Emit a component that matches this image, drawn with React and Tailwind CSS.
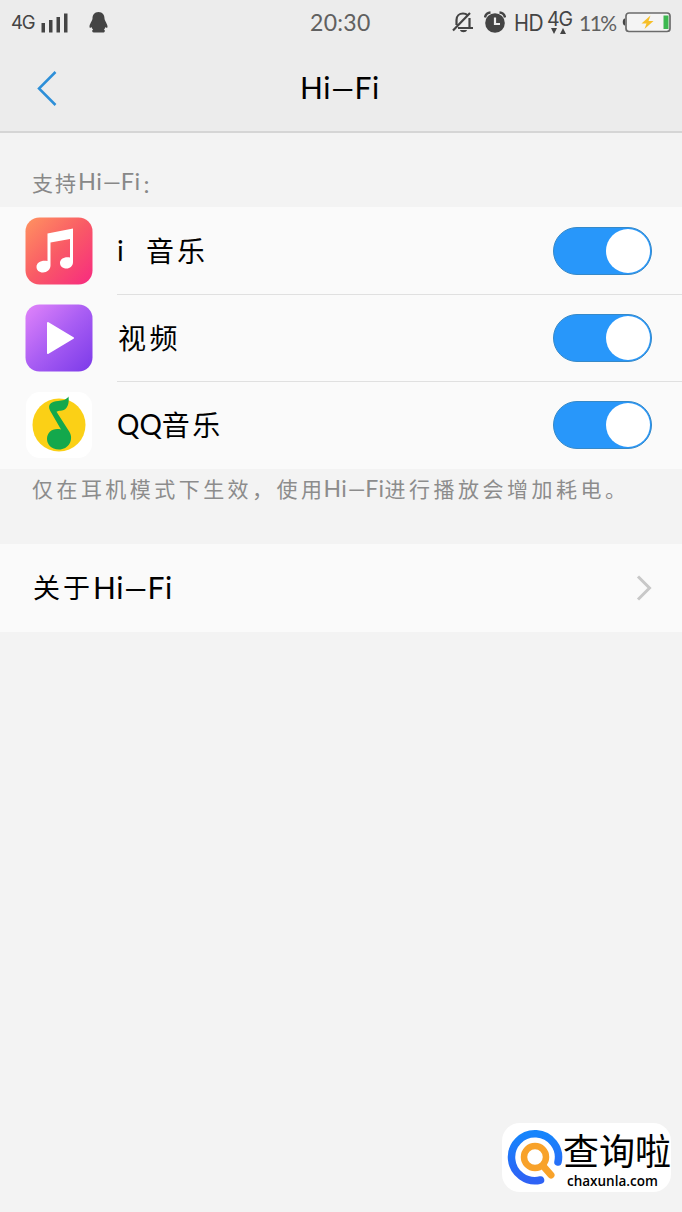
import React from "react";

function StatusBar() {
  return (
    <div className="flex h-11 items-center pl-[11px] pr-[11px] text-[#444]">
      <div className="flex w-[299px] items-center">
        <span className="w-[29px] font-['Inter',sans-serif] text-[18.500px] leading-none tracking-[-1.200px] whitespace-nowrap">4G</span>
        <svg width="28" height="22" viewBox="0 0 28 22" fill="#444">
          <rect x="1.500" y="12" width="3.500" height="9.500" />
          <rect x="9" y="9" width="3.500" height="12.500" />
          <rect x="16.500" y="6" width="3.500" height="15.500" />
          <rect x="24" y="2.500" width="3.500" height="19" />
        </svg>
        <svg className="ml-[20px]" width="20" height="22" viewBox="0 0 20 22" fill="#444">
          <path d="M10.500 1C6.300 1 4.500 4 4.500 7.500c0 2-3 5.500-3 8 0 1.600.8 1.600 2 .4.300 1 .9 1.900 1.600 2.600-1.500.8-1.200 3 .9 3h9c2.200 0 2.400-2.200.9-3 .7-.7 1.300-1.600 1.600-2.600 1.200 1.200 2 1.200 2-.4 0-2.500-3-6-3-8C16.500 4 14.700 1 10.500 1z" />
        </svg>
      </div>
      <span className="w-[142px] font-['Lato',sans-serif] text-[23px] leading-none tracking-[0.3px] text-[#606060]">20:30</span>
      <svg width="22" height="24" viewBox="0 0 22 24" fill="none" stroke="#444" strokeWidth="2.200">
        <path d="M4.500 15V10c0-4 3-6.500 6.500-6.500 2 0 3.500.7 4.500 1.800M17.500 8v10M6 18h15M1 20.500L18 3" />
        <path d="M8 20h7c-.5 3-6.500 3-7 0z" fill="#444" stroke="none" />
      </svg>
      <svg className="ml-[10px]" width="22" height="22" viewBox="0 0 22 22">
        <circle cx="11" cy="12" r="9.800" fill="#444" />
        <path d="M1 6.500A6 6 0 0 1 6.500 1.500M15.500 1.500A6 6 0 0 1 21 6.500" fill="none" stroke="#444" strokeWidth="2.500" />
        <path d="M11 6.500v6.500h5" fill="none" stroke="#ececec" strokeWidth="2.200" />
      </svg>
      <span className="ml-[8px] w-[33px] origin-left scale-x-[.85] font-['Lato',sans-serif] text-[23px] leading-none tracking-[-0.5px]">HD</span>
      <div className="flex w-[32px] flex-col items-start">
        <span className="font-['Inter',sans-serif] text-[19.500px] leading-[18px] tracking-[-1.200px]">4G</span>
        <svg className="ml-[4px]" width="16" height="6" viewBox="0 0 16 6" fill="#444">
          <path d="M0 0h6L3 6zM9 6h6l-3-6z" />
        </svg>
      </div>
      <span className="w-[43px] font-['Lato',sans-serif] text-[21px] leading-none tracking-[-1.500px] text-[#606060]">11%</span>
      <svg width="49" height="22" viewBox="0 0 49 22">
        <path d="M3 7.500C0 7.500 0 14.500 3 14.500z" fill="#444" />
        <rect x="4" y="2" width="44" height="18.500" rx="3" fill="#f4f4f4" stroke="#6b6b6b" strokeWidth="1.700" />
        <rect x="41.500" y="4.500" width="5" height="13.500" fill="#3cb850" />
        <path d="M28.500 4.500l-9 8h5l-2 5.500 9-8h-5z" fill="#f6bf28" />
      </svg>
    </div>
  );
}

// "Hi–Fi" is set with a long dash, sized in em so it works at any font size
function HiFi({ className }) {
  return (
    <span className={"inline-flex font-['Lato',sans-serif] leading-none " + className}>
      <span className="tracking-[0.02em]">Hi</span>
      <span className="mx-[0.1em] scale-x-[1.6]">–</span>
      <span className="tracking-[0.02em]">Fi</span>
    </span>
  );
}

function Header() {
  return (
    <div className="h-[133px] border-b-2 border-[#d5d5d5] bg-[#ececec]">
      <StatusBar />
      <div className="flex h-[88px] items-center">
        <svg className="ml-[36px]" width="22" height="36" viewBox="0 0 22 36" fill="none" stroke="#2d8fd8" strokeWidth="2.500">
          <path d="M19.500 2L3 18.500L19.500 35" />
        </svg>
        <HiFi className="ml-[242px] pb-[2px] text-[30px] text-black" />
      </div>
    </div>
  );
}

function Toggle() {
  return (
    <div className="mr-[30px] flex h-12 w-[99px] items-center justify-end rounded-full border border-[#3689c8] bg-[#2897fa] pr-[1px]">
      <div className="h-11 w-11 rounded-full bg-white" />
    </div>
  );
}

function MusicIcon() {
  return (
    <svg width="68" height="68" viewBox="0 0 68 68">
      <defs>
        <linearGradient id="music" x1="0" y1="0" x2="1" y2="1">
          <stop offset="0" stopColor="#ff9360" />
          <stop offset=".5" stopColor="#f95a66" />
          <stop offset="1" stopColor="#f72a80" />
        </linearGradient>
      </defs>
      <rect x=".5" y=".5" width="67" height="67" rx="14" fill="url(#music)" />
      <path d="M22.500 16.500L48 11.500v33.500c0 4-3 6.500-6.500 6.500-4 0-6.500-2.500-6.500-5.500 0-4 4-6.500 10-5.500V22L25.500 25.500v23c0 4-3.500 7-7.500 7s-6.500-2.500-6.500-5.500c0-4.500 4.500-7 11-6z" fill="#fff" />
    </svg>
  );
}

function VideoIcon() {
  return (
    <svg width="68" height="68" viewBox="0 0 68 68">
      <defs>
        <linearGradient id="video" x1="0" y1="0" x2="1" y2="1">
          <stop offset="0" stopColor="#e184fa" />
          <stop offset=".5" stopColor="#a85df3" />
          <stop offset="1" stopColor="#7b3ae9" />
        </linearGradient>
      </defs>
      <rect x=".5" y=".5" width="67" height="67" rx="14" fill="url(#video)" />
      <path d="M23 19L48 34L23 49z" fill="#fff" stroke="#fff" strokeWidth="2" strokeLinejoin="round" />
    </svg>
  );
}

function QQIcon() {
  return (
    <svg width="68" height="68" viewBox="0 0 68 68">
      <rect x="1" y="1" width="66" height="66" rx="14" fill="#fff" />
      <circle cx="34" cy="34" r="26.500" fill="#fbd016" />
      <path d="M43.500 5.500c1 7-1 13-6.500 14-2 .3-4 .3-5.500 1.200L44.500 41c4.500 8-1 17.500-10.500 17.500C26 58.500 22 53 22 48c0-7 6-11.500 14-9.500L25 19.500C22 13 27 10.500 33 10c5-.4 8-1 10.500-4.500z" fill="#13a84c" />
    </svg>
  );
}

function Row({ icon, line, children }) {
  return (
    <div className="flex h-[87px] items-center pl-[25px]">
      {icon}
      <div className={"ml-6 flex h-full flex-1 items-center justify-between " + (line ? "shadow-[0_1px_0_#e0e0e0]" : "")}>
        <div className="flex items-center font-['Lato','Noto_Sans_CJK_SC',sans-serif] text-[28px] leading-none text-black">{children}</div>
        <Toggle />
      </div>
    </div>
  );
}

function Watermark() {
  return (
    <div className="absolute right-[11px] bottom-[20px] flex h-[69px] w-[169px] items-center rounded-[18px] bg-white pl-[5px]">
      <svg className="shrink-0" width="56" height="58" viewBox="0 0 56 58" fill="none" strokeLinecap="round">
        <defs>
          <linearGradient id="ring" x1="0" y1="0" x2="0" y2="1">
            <stop offset="0" stopColor="#1685fc" />
            <stop offset="1" stopColor="#2e62f5" />
          </linearGradient>
        </defs>
        <path d="M51 33A23.500 23.500 0 1 0 33.500 51" stroke="url(#ring)" strokeWidth="7.500" />
        <circle cx="28" cy="28" r="11" stroke="#f8a22a" strokeWidth="6.500" />
        <path d="M37 38L44 46" stroke="#f8a22a" strokeWidth="7" />
      </svg>
      <div className="flex flex-col whitespace-nowrap text-black">
        <span className="font-['Noto_Sans_CJK_SC',sans-serif] text-[36px] leading-[42px]">查询啦</span>
        <span className="mt-[4px] ml-[4px] font-['Open_Sans',sans-serif] text-[13.500px] leading-[14px] font-semibold">chaxunla.com</span>
      </div>
    </div>
  );
}

function App() {
  return (
    <div className="relative h-[1212px] w-[682px] overflow-hidden bg-[#f3f3f3]">
      <Header />
      <div className="flex h-[74px] items-center pt-[24px] pl-8 text-[#888]">
        <span className="font-['Noto_Sans_CJK_SC',sans-serif] text-[21px] leading-none tracking-[2px]">支持</span>
        <HiFi className="text-[23.500px]" />
        <span className="ml-[3px] pt-[3px] font-['Lato',sans-serif] text-[24px] leading-none">:</span>
      </div>
      <div className="h-[262px] bg-[#fafafa]">
        <Row icon={<MusicIcon />} line>
          <span className="w-[29px] pb-[2px]">i</span>
          <span className="tracking-[3px]">音乐</span>
        </Row>
        <Row icon={<VideoIcon />} line>
          <span className="ml-[1px] tracking-[3.500px]">视频</span>
        </Row>
        <Row icon={<QQIcon />}>
          <span className="pb-[2px]">QQ</span>
          <span className="tracking-[2.500px]">音乐</span>
        </Row>
      </div>
      <div className="flex h-[75px] items-start pt-[8px] pl-8 font-['Noto_Sans_CJK_SC',sans-serif] text-[21px] leading-[22px] whitespace-nowrap text-[#8c8c8c]">
        <span className="tracking-[3.450px]">仅在耳机模式下生效，使用</span>
        <HiFi className="-ml-[2px] text-[23px]" />
        <span className="tracking-[3.500px]">进行播放会增加耗电。</span>
      </div>
      <div className="flex h-[88px] items-center bg-[#fafafa] pb-[3px] pl-[33px] text-black">
        <span className="font-['Noto_Sans_CJK_SC',sans-serif] text-[27px] leading-none tracking-[3px]">关于</span>
        <HiFi className="text-[30px]" />
        <svg className="mt-[3px] mr-[30px] ml-auto" width="16" height="26" viewBox="0 0 16 26" fill="none" stroke="#c8c8c8" strokeWidth="3">
          <path d="M2 1.500L13.500 13L2 24.500" />
        </svg>
      </div>
      <Watermark />
    </div>
  );
}

export default App;
